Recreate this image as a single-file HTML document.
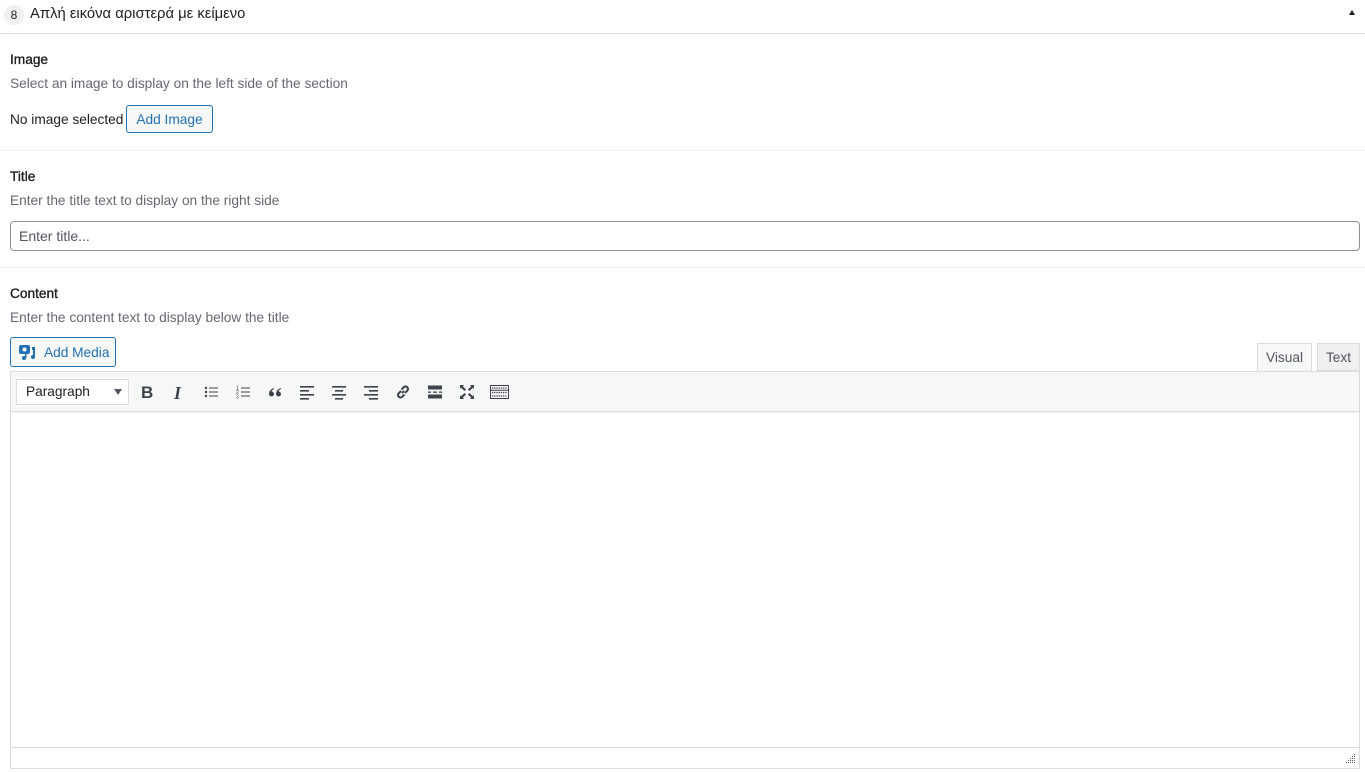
<!DOCTYPE html>
<html><head><meta charset="utf-8"><style>
*{box-sizing:border-box;margin:0;padding:0}
body{width:1365px;height:772px;background:#fff;font-family:"Liberation Sans","Noto Sans CJK SC",sans-serif;font-size:13.7px;color:#1e1e1e;position:relative;overflow:hidden}
.a{position:absolute;white-space:nowrap}
.lbl{font-size:13.7px;color:#1e1e1e;-webkit-text-stroke:0.35px #1e1e1e}
.desc{color:#646970;font-size:13.7px}
.hr{position:absolute;left:0;width:1365px;height:1px;background:#f0f0f1}
.ic{position:absolute;top:384px;width:16px;height:16px}
</style></head><body>
<div class="a" style="left:4px;top:5px;width:20px;height:20px;border-radius:50%;background:#f0f0f1;text-align:center;line-height:20px;font-size:12px">8</div>
<div class="a" style="left:30px;top:6px;font-size:14.8px">Απλή εικόνα αριστερά με κείμενο</div>
<div class="a" style="left:1349px;top:10px;width:0;height:0;border-left:3px solid transparent;border-right:3px solid transparent;border-bottom:5px solid #1e1e1e"></div>
<div class="hr" style="top:33px;background:#dcdcde"></div>

<div class="a lbl" style="left:10px;top:52px">Image</div>
<div class="a desc" style="left:10px;top:76px">Select an image to display on the left side of the section</div>
<div class="a" style="left:10px;top:112px">No image selected</div>
<div class="a" style="left:126px;top:105px;width:87px;height:28px;border:1px solid #2271b1;border-radius:3px;background:#f6f7f7;color:#2271b1;text-align:center;line-height:27px">Add Image</div>
<div class="hr" style="top:150px"></div>

<div class="a lbl" style="left:10px;top:169px">Title</div>
<div class="a desc" style="left:10px;top:193px">Enter the title text to display on the right side</div>
<div class="a" style="left:10px;top:221px;width:1350px;height:30px;border:1px solid #8c8f94;border-radius:4px;padding-left:8px;line-height:28px;color:#50575e;font-size:14px">Enter title...</div>
<div class="hr" style="top:267px"></div>

<div class="a lbl" style="left:10px;top:286px">Content</div>
<div class="a desc" style="left:10px;top:310px">Enter the content text to display below the title</div>
<div class="a" style="left:10px;top:337px;width:106px;height:30px;border:1px solid #2271b1;border-radius:3px;background:#f6f7f7;color:#2271b1;line-height:29px;padding-left:33px">Add Media</div>
<svg class="a" style="left:19px;top:344px" width="18" height="17" viewBox="0 0 18 17"><rect x="0" y="1" width="11" height="9" rx="2" fill="#2271b1"/><circle cx="5.5" cy="5.5" r="2" fill="#fff"/><path d="M13 3h3v10a2 2 0 1 1-2-2h0V6h-1z" fill="#2271b1"/><circle cx="5" cy="14" r="2" fill="#2271b1"/><rect x="6" y="9" width="1.5" height="5" fill="#2271b1"/></svg>

<div class="a" style="left:1257px;top:343px;width:55px;height:29px;border:1px solid #dcdcde;border-bottom:none;background:#f6f7f7;text-align:center;line-height:28px;color:#50575e">Visual</div>
<div class="a" style="left:1317px;top:343px;width:43px;height:28px;border:1px solid #dcdcde;background:#f0f0f1;text-align:center;line-height:28px;color:#50575e">Text</div>

<div class="a" style="left:10px;top:371px;width:1350px;height:398px;border:1px solid #dcdcde"></div>
<div class="a" style="left:11px;top:372px;width:1348px;height:40px;background:#f6f7f7;border-bottom:1px solid #dcdcde;box-shadow:0 1px 1px rgba(0,0,0,.06)"></div>
<div class="a" style="left:16px;top:379px;width:113px;height:26px;border:1px solid #dcdcde;background:#fff;padding-left:9px;line-height:24px;color:#1e1e1e">Paragraph</div>
<div class="a" style="left:114px;top:389px;width:0;height:0;border-left:4px solid transparent;border-right:4px solid transparent;border-top:6px solid #50575e"></div>

<div class="a" style="left:141px;top:383px;font-weight:bold;font-size:17px;color:#3c434a">B</div>
<div class="a" style="left:174px;top:383px;font-style:italic;font-family:'Liberation Serif',serif;font-weight:bold;font-size:18px;color:#3c434a">I</div>
<svg class="ic" style="left:203px" viewBox="0 0 16 16" fill="#3c434a"><circle cx="3" cy="4" r="1.2"/><circle cx="3" cy="8" r="1.2"/><circle cx="3" cy="12" r="1.2"/><rect x="6" y="3.5" width="9" height="1"/><rect x="6" y="7.5" width="9" height="1"/><rect x="6" y="11.5" width="9" height="1"/></svg>
<svg class="ic" style="left:235px" viewBox="0 0 16 16" fill="#3c434a"><text x="1" y="6" font-size="5" font-family="Liberation Sans">1</text><text x="1" y="10" font-size="5" font-family="Liberation Sans">2</text><text x="1" y="14.5" font-size="5" font-family="Liberation Sans">3</text><rect x="6" y="3.5" width="9" height="1"/><rect x="6" y="7.5" width="9" height="1"/><rect x="6" y="11.5" width="9" height="1"/></svg>
<svg class="ic" style="left:267px" viewBox="0 0 16 16" fill="#3c434a"><path d="M7 4C4 5 2 7 2 10a2.5 2.5 0 1 0 2.5-2.5C5 6 6 5.5 7 5zM14 4c-3 1-5 3-5 6a2.5 2.5 0 1 0 2.5-2.5C12 6 13 5.5 14 5z"/></svg>
<svg class="ic" style="left:299px" viewBox="0 0 16 16" fill="#3c434a"><rect x="1" y="2" width="14" height="1.6"/><rect x="1" y="6" width="9" height="1.6"/><rect x="1" y="10" width="14" height="1.6"/><rect x="1" y="14" width="9" height="1.6"/></svg>
<svg class="ic" style="left:331px" viewBox="0 0 16 16" fill="#3c434a"><rect x="1" y="2" width="14" height="1.6"/><rect x="4" y="6" width="8" height="1.6"/><rect x="1" y="10" width="14" height="1.6"/><rect x="4" y="14" width="8" height="1.6"/></svg>
<svg class="ic" style="left:363px" viewBox="0 0 16 16" fill="#3c434a"><rect x="1" y="2" width="14" height="1.6"/><rect x="6" y="6" width="9" height="1.6"/><rect x="1" y="10" width="14" height="1.6"/><rect x="6" y="14" width="9" height="1.6"/></svg>
<svg class="ic" style="left:395px" viewBox="0 0 16 16" fill="none" stroke="#3c434a" stroke-width="2"><path d="M7 9l2-2M6 7L3.5 9.5a2.5 2.5 0 0 0 3.5 3.5L9.5 10.5M10 9l2.5-2.5A2.5 2.5 0 0 0 9 3L6.5 5.5"/></svg>
<svg class="ic" style="left:427px" viewBox="0 0 16 16" fill="#3c434a"><rect x="1" y="1.5" width="14" height="4"/><rect x="1" y="7.5" width="3" height="1.3"/><rect x="6" y="7.5" width="4" height="1.3"/><rect x="12" y="7.5" width="3" height="1.3"/><rect x="1" y="10.5" width="14" height="4"/></svg>
<svg class="ic" style="left:459px" viewBox="0 0 16 16" fill="#3c434a"><path d="M1 1h4L3.8 2.2 7 5.5 5.5 7 2.2 3.8 1 5zM15 1v4l-1.2-1.2L10.5 7 9 5.5l3.2-3.3L11 1zM1 15v-4l1.2 1.2L5.5 9 7 10.5l-3.2 3.3L5 15zM15 15h-4l1.2-1.2L9 10.5 10.5 9l3.3 3.2L15 11z"/></svg>
<svg class="ic" style="left:490px;width:19px" viewBox="0 0 19 16" fill="none" stroke="#3c434a"><rect x="0.5" y="1.5" width="18" height="13"/><path d="M2 4h15M2 8.5h15M2 12h15" stroke-dasharray="1.3 0.9" stroke-width="1.2"/><path d="M1 6.3h17" stroke-width="1"/></svg>

<div class="a" style="left:11px;top:747px;width:1348px;height:1px;background:#dcdcde"></div>
<svg class="a" style="left:1346px;top:754px" width="10" height="10" viewBox="0 0 10 10" fill="#50575e"><rect x="8" y="0" width="1" height="1"/><rect x="6" y="2" width="1" height="1"/><rect x="8" y="2" width="1" height="1"/><rect x="4" y="4" width="1" height="1"/><rect x="6" y="4" width="1" height="1"/><rect x="8" y="4" width="1" height="1"/><rect x="2" y="6" width="1" height="1"/><rect x="4" y="6" width="1" height="1"/><rect x="6" y="6" width="1" height="1"/><rect x="8" y="6" width="1" height="1"/><rect x="0" y="8" width="1" height="1"/><rect x="2" y="8" width="1" height="1"/><rect x="4" y="8" width="1" height="1"/><rect x="6" y="8" width="1" height="1"/><rect x="8" y="8" width="1" height="1"/></svg>
</body></html>
